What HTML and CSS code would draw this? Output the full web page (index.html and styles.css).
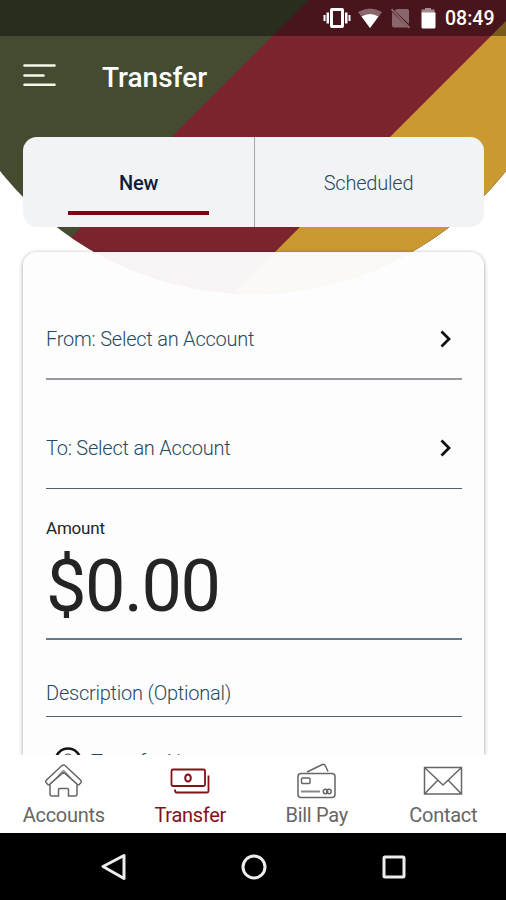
FILE: index.html
```html
<!DOCTYPE html>
<html lang="en">
<head>
<meta charset="utf-8">
<title>Transfer</title>
<link rel="stylesheet" href="styles.css">
</head>
<body>
<div class="screen">
  <svg class="backdrop" viewBox="0 0 506 300" aria-hidden="true">
    <clipPath id="dome"><circle cx="253" cy="-27.500" r="321.500"/></clipPath>
    <g clip-path="url(#dome)">
      <path fill="#434c31" d="M0 0H506V300H0z"/>
      <path fill="#7b242f" d="M308.500 0H506V300H8.500z"/>
      <path fill="#ca9a30" d="M527 0V300H227z"/>
    </g>
  </svg>

  <header class="status">
    <svg class="status-icons" viewBox="0 0 120 36" aria-hidden="true">
      <g fill="#fff">
        <path fill-rule="evenodd" d="M10 8h10q2 0 2 2v16q0 2-2 2H10q-2 0-2-2V10q0-2 2-2zm1 3v14h8V11z"/>
        <path d="M4.500 12.500h2.500v11H4.500zM1.500 15h2v6h-2zM23 12.500h2.500v11H23zM26.500 15h2v6h-2z"/>
        <path fill-opacity=".35" d="M36 12q12-7 24 0L48 28z"/>
        <path d="M39.500 16.500q8.500-5 17 0L48 28z"/>
        <path fill-opacity=".35" d="M75 9h10q2 0 2 2v13L72.500 10.500zM70 12l16 15.500H72q-2 0-2-2z"/>
        <path fill-opacity=".35" d="M68.800 9.800l1.400-1.400 18 18.600-1.400 1.400z"/>
        <path fill-opacity=".5" d="M103 8h6v1.500h3.500V13h-13V9.500h3.500z"/>
        <path d="M99.500 12.500h14V27q0 1.500-1.500 1.500h-11q-1.500 0-1.500-1.500z"/>
      </g>
    </svg>
    <span class="clock">08:49</span>
  </header>

  <div class="appbar">
    <svg class="menu" viewBox="0 0 34 26" aria-hidden="true"><path d="M1.500 2.500h30M1.500 12.500h19M1.500 21.800h30"/></svg>
    <h1>Transfer</h1>
  </div>

  <nav class="tabs">
    <div class="tab tab-active"><span>New</span></div>
    <div class="tab"><span>Scheduled</span></div>
  </nav>

  <main class="card">
    <div class="row row-from">
      <span class="label">From: Select an Account</span>
      <svg class="chevron" viewBox="0 0 12 18" aria-hidden="true"><path d="M1.500 1.500L9 9l-7.500 7.500"/></svg>
    </div>
    <div class="row row-to">
      <span class="label">To: Select an Account</span>
      <svg class="chevron" viewBox="0 0 12 18" aria-hidden="true"><path d="M1.500 1.500L9 9l-7.500 7.500"/></svg>
    </div>
    <div class="amount">
      <span class="caption">Amount</span>
      <span class="value">$0.00</span>
    </div>
    <div class="row row-description"><span class="label">Description (Optional)</span></div>
    <div class="when">
      <svg class="clock-icon" viewBox="0 0 28 28" aria-hidden="true"><circle cx="14" cy="14" r="12.500"/><path stroke="#777" stroke-width="1.500" d="M11 8q3-1.500 6 0"/></svg>
      <span>Transfer Now</span>
    </div>
  </main>

  <nav class="bottom">
    <div class="item">
      <svg viewBox="0 0 42 38" aria-hidden="true"><path d="M3 22.500l1.600 1.800q1 .7 2 0L20.500 12.200l13.900 12.100q1 .7 2 0l1.600-1.800q.7-1 0-2L22.300 5.800q-1.800-1.600-3.600 0L3 20.500q-.7 1 0 2zM7 24.500V34q0 2 2 2h6.500v-6.500q0-1 1-1h8q1 0 1 1V36H32q2 0 2-2v-9.500"/><path stroke-width="1" d="M8 23.500L20.500 10 33 23.500"/></svg>
      <span>Accounts</span>
    </div>
    <div class="item item-active">
      <svg viewBox="0 0 42 38" aria-hidden="true"><rect x="2.500" y="9.500" width="33.500" height="16.500" rx="1.500" stroke-width="1.800"/><path stroke-width="1.800" d="M39.500 15.500V31q0 1.500-1.500 1.500H7.500q-1.500 0-1.500-3"/><ellipse cx="19" cy="18" rx="2.800" ry="3.600" stroke-width="2"/></svg>
      <span>Transfer</span>
    </div>
    <div class="item">
      <svg viewBox="0 0 42 38" aria-hidden="true"><rect x="2" y="13.500" width="37" height="24" rx="3"/><path d="M11 12L26.500 4.500q1.700-.7 2.700 1L32 11.500"/><rect x="5.500" y="18" width="8.500" height="5.500" rx="1"/><path stroke-width="2" stroke="#888" d="M5 31.500H24"/><circle cx="29.500" cy="31.500" r="2.200"/><circle cx="33" cy="31.500" r="2.200"/></svg>
      <span>Bill Pay</span>
    </div>
    <div class="item">
      <svg viewBox="0 0 42 38" aria-hidden="true"><path d="M2.500 7.500h37V34h-37zM2.500 7.500L21 25l18.500-17.500M2.500 34l13-13.500M39.500 34l-13-13.500"/></svg>
      <span>Contact</span>
    </div>
  </nav>

  <footer class="system">
    <svg viewBox="0 0 28 28" aria-hidden="true"><path d="M3 13.500L24 2.500v23z"/></svg>
    <svg viewBox="0 0 28 28" aria-hidden="true"><circle cx="14" cy="14" r="11"/></svg>
    <svg viewBox="0 0 28 28" aria-hidden="true"><rect x="4" y="4" width="20" height="20" rx="1"/></svg>
  </footer>
</div>
</body>
</html>
```
FILE: styles.css
```css
* { box-sizing: border-box; }
body { margin: 0; font-family: Roboto, "Liberation Sans", sans-serif; background: #fff; }
.screen { position: relative; isolation: isolate; width: 506px; height: 900px; overflow: hidden; display: flex; flex-direction: column; }
.backdrop { position: absolute; inset: 0 0 auto; z-index: -1; width: 506px; height: 300px; }
svg { flex: none; display: block; fill: none; overflow: visible; }

.status { flex: none; height: 36px; display: flex; align-items: center; justify-content: flex-end; padding-right: 10px; background: rgba(0, 0, 0, .4); color: #fff; }
.status-icons { width: 120px; height: 36px; }
.clock { width: 51px; margin-left: 3px; font-size: 19.500px; font-weight: 500; line-height: 36px; padding-top: 2px; white-space: nowrap; }

.appbar { flex: none; height: 101px; display: flex; align-items: flex-start; padding: 25px 0 0 23px; }
.menu { width: 34px; height: 26px; margin-top: 2px; stroke: #f3f9ea; stroke-width: 2.600; stroke-linecap: round; }
h1 { margin: 0 0 0 45px; color: #fff; font-size: 28px; line-height: 33px; font-weight: 500; }

.tabs { flex: none; height: 90px; margin: 0 22px 0 23px; display: grid; grid-template-columns: 231px 1fr; border-radius: 14px; overflow: hidden; background: #f1f3f5; }
.tab { display: flex; justify-content: center; padding-top: 34px; font-size: 20px; line-height: 24px; font-weight: 300; color: #274960; letter-spacing: -.2px; }
.tab + .tab { border-left: 1px solid #a5a8ab; padding-right: 2px; }
.tab-active { position: relative; color: #101b3c; font-weight: 500; }
.tab-active::after { content: ""; position: absolute; left: 45px; bottom: 12px; width: 141px; height: 4px; background: #7e0811; }

.card { flex: 1; min-height: 0; overflow: hidden; margin: 25px 22px 0 23px; padding: 0 22px 0 23px; border-radius: 14px 14px 0 0; background: rgba(253, 253, 253, .96); box-shadow: 0 1px 4px rgba(0, 0, 0, .4); }
.row { display: flex; justify-content: space-between; align-items: center; border-bottom: 1px solid #53606c; font-size: 20px; font-weight: 300; color: #274960; }
.row-from { height: 128px; padding-top: 47px; border-bottom: 2px solid #96999e; }
.row-to { height: 109px; padding-top: 28px; }
.row-description { height: 77px; padding-top: 30px; }
.label { white-space: nowrap; letter-spacing: -.23px; }
.chevron { width: 12px; height: 18px; margin-right: 10px; stroke: #111; stroke-width: 2.800; }
.amount { height: 151px; border-bottom: 2px solid #687989; display: flex; flex-direction: column; color: #242424; }
.caption { margin-top: 29px; font-size: 17px; line-height: 20px; letter-spacing: -.2px; }
.value { font-size: 72px; line-height: 80px; margin-top: 9px; letter-spacing: -1.500px; white-space: nowrap; }
.when { display: flex; align-items: flex-start; padding: 30px 0 0 8px; color: #274960; font-size: 20px; font-weight: 300; line-height: 24px; letter-spacing: -.23px; }
.when span { margin: 3px 0 0 9px; }
.clock-icon { width: 28px; height: 28px; stroke: #111; stroke-width: 2.500; }

.bottom { flex: none; height: 78px; display: grid; grid-template-columns: repeat(4, 1fr); background: #fff; position: relative; }
.item { display: flex; flex-direction: column; align-items: center; padding: 5px 0 0 1px; color: #666; font-size: 20px; line-height: 24px; letter-spacing: -.3px; }
.item svg { width: 42px; height: 38px; margin-bottom: 5px; stroke: currentColor; stroke-width: 1.500; }
.item-active { color: #841018; }

.system { flex: none; height: 67px; background: #000; display: flex; justify-content: center; gap: 112px; padding: 20px 0 0 2px; }
.system svg { width: 28px; height: 28px; stroke: #eee; stroke-width: 3; stroke-linejoin: round; }
```
